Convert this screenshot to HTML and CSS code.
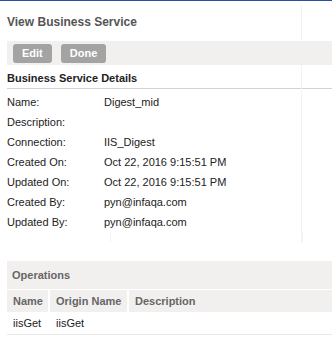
FILE: index.html
```html
<!DOCTYPE html>
<html>
<head>
<meta charset="utf-8">
<link rel="stylesheet" href="styles.css">
</head>
<body>
<div class="topbar"></div>
<div class="page">
  <h1 class="title">View Business Service</h1>
  <div class="toolbar">
    <button class="btn">Edit</button>
    <button class="btn">Done</button>
  </div>
  <div class="section-title">Business Service Details</div>
  <div class="details">
    <div class="row"><span class="label">Name:</span><span class="value">Digest_mid</span></div>
    <div class="row"><span class="label">Description:</span><span class="value"></span></div>
    <div class="row"><span class="label">Connection:</span><span class="value">IIS_Digest</span></div>
    <div class="row"><span class="label">Created On:</span><span class="value">Oct 22, 2016 9:15:51 PM</span></div>
    <div class="row"><span class="label">Updated On:</span><span class="value">Oct 22, 2016 9:15:51 PM</span></div>
    <div class="row"><span class="label">Created By:</span><span class="value">pyn@infaqa.com</span></div>
    <div class="row"><span class="label">Updated By:</span><span class="value">pyn@infaqa.com</span></div>
    <div class="row-gap"><span class="gap-box"></span></div>
  </div>
  <div class="ops">
    <div class="ops-title">Operations</div>
    <div class="ops-head">
      <div class="col c1">Name</div>
      <div class="col c2">Origin Name</div>
      <div class="col c3">Description</div>
    </div>
    <div class="ops-row">
      <div class="col c1">iisGet</div>
      <div class="col c2">iisGet</div>
      <div class="col c3"></div>
    </div>
  </div>
</div>
</body>
</html>
```
FILE: styles.css
```css
html, body { margin: 0; padding: 0; background: #fff; }
body { font-family: "Liberation Sans", Arial, sans-serif; font-size: 11px; color: #222; width: 332px; height: 342px; overflow: hidden; position: relative; }
.topbar { height: 1px; background: #2b4fa0; }
.page { padding-left: 7px; position: relative; }
.page::after { content: ""; position: absolute; left: 301px; top: 4px; height: 238px; border-left: 1px solid #f2f2f2; }
.title { margin: 0; padding-top: 14px; height: 26px; font-size: 12px; font-weight: bold; color: #555; line-height: 14px; }
.toolbar { background: #f1f0ee; height: 24px; display: flex; align-items: center; gap: 9px; padding-left: 6px; }
.btn { border: 0; border-radius: 3px; background: #a3a3a3; color: #fff; font-family: "Liberation Sans", Arial, sans-serif; font-weight: bold; font-size: 11px; height: 19px; padding: 0 9px; line-height: 19px; }
.section-title { font-weight: bold; font-size: 11px; color: #222; height: 23px; line-height: 26px; border-bottom: 1px solid #d2d2d2; }
.details { padding-top: 3px; }
.row { display: flex; height: 20px; line-height: 20px; }
.label { width: 97px; }
.row-gap { height: 12px; }
.gap-box { display: block; margin-left: 103px; width: 191px; height: 10px; border-left: 1px solid #f4f4f4; border-right: 1px solid #f4f4f4; }
.ops { margin-top: 17px; }
.ops-title { background: #f1f0ee; height: 28px; line-height: 28px; padding-left: 5px; font-weight: bold; color: #666; font-size: 11px; }
.ops-head { display: flex; background: #f1f0ee; height: 22px; line-height: 22px; border-top: 1px solid #fff; font-weight: bold; color: #666; }
.col { padding-left: 6px; box-sizing: border-box; }
.ops-head .col { border-right: 2px solid #fff; }
.ops-head .c3 { border-right: 0; }
.c1 { width: 43px; }
.c2 { width: 79px; }
.c3 { flex: 1; }
.ops-row { display: flex; height: 22px; line-height: 22px; border-bottom: 1px solid #e8e8e8; }
```
